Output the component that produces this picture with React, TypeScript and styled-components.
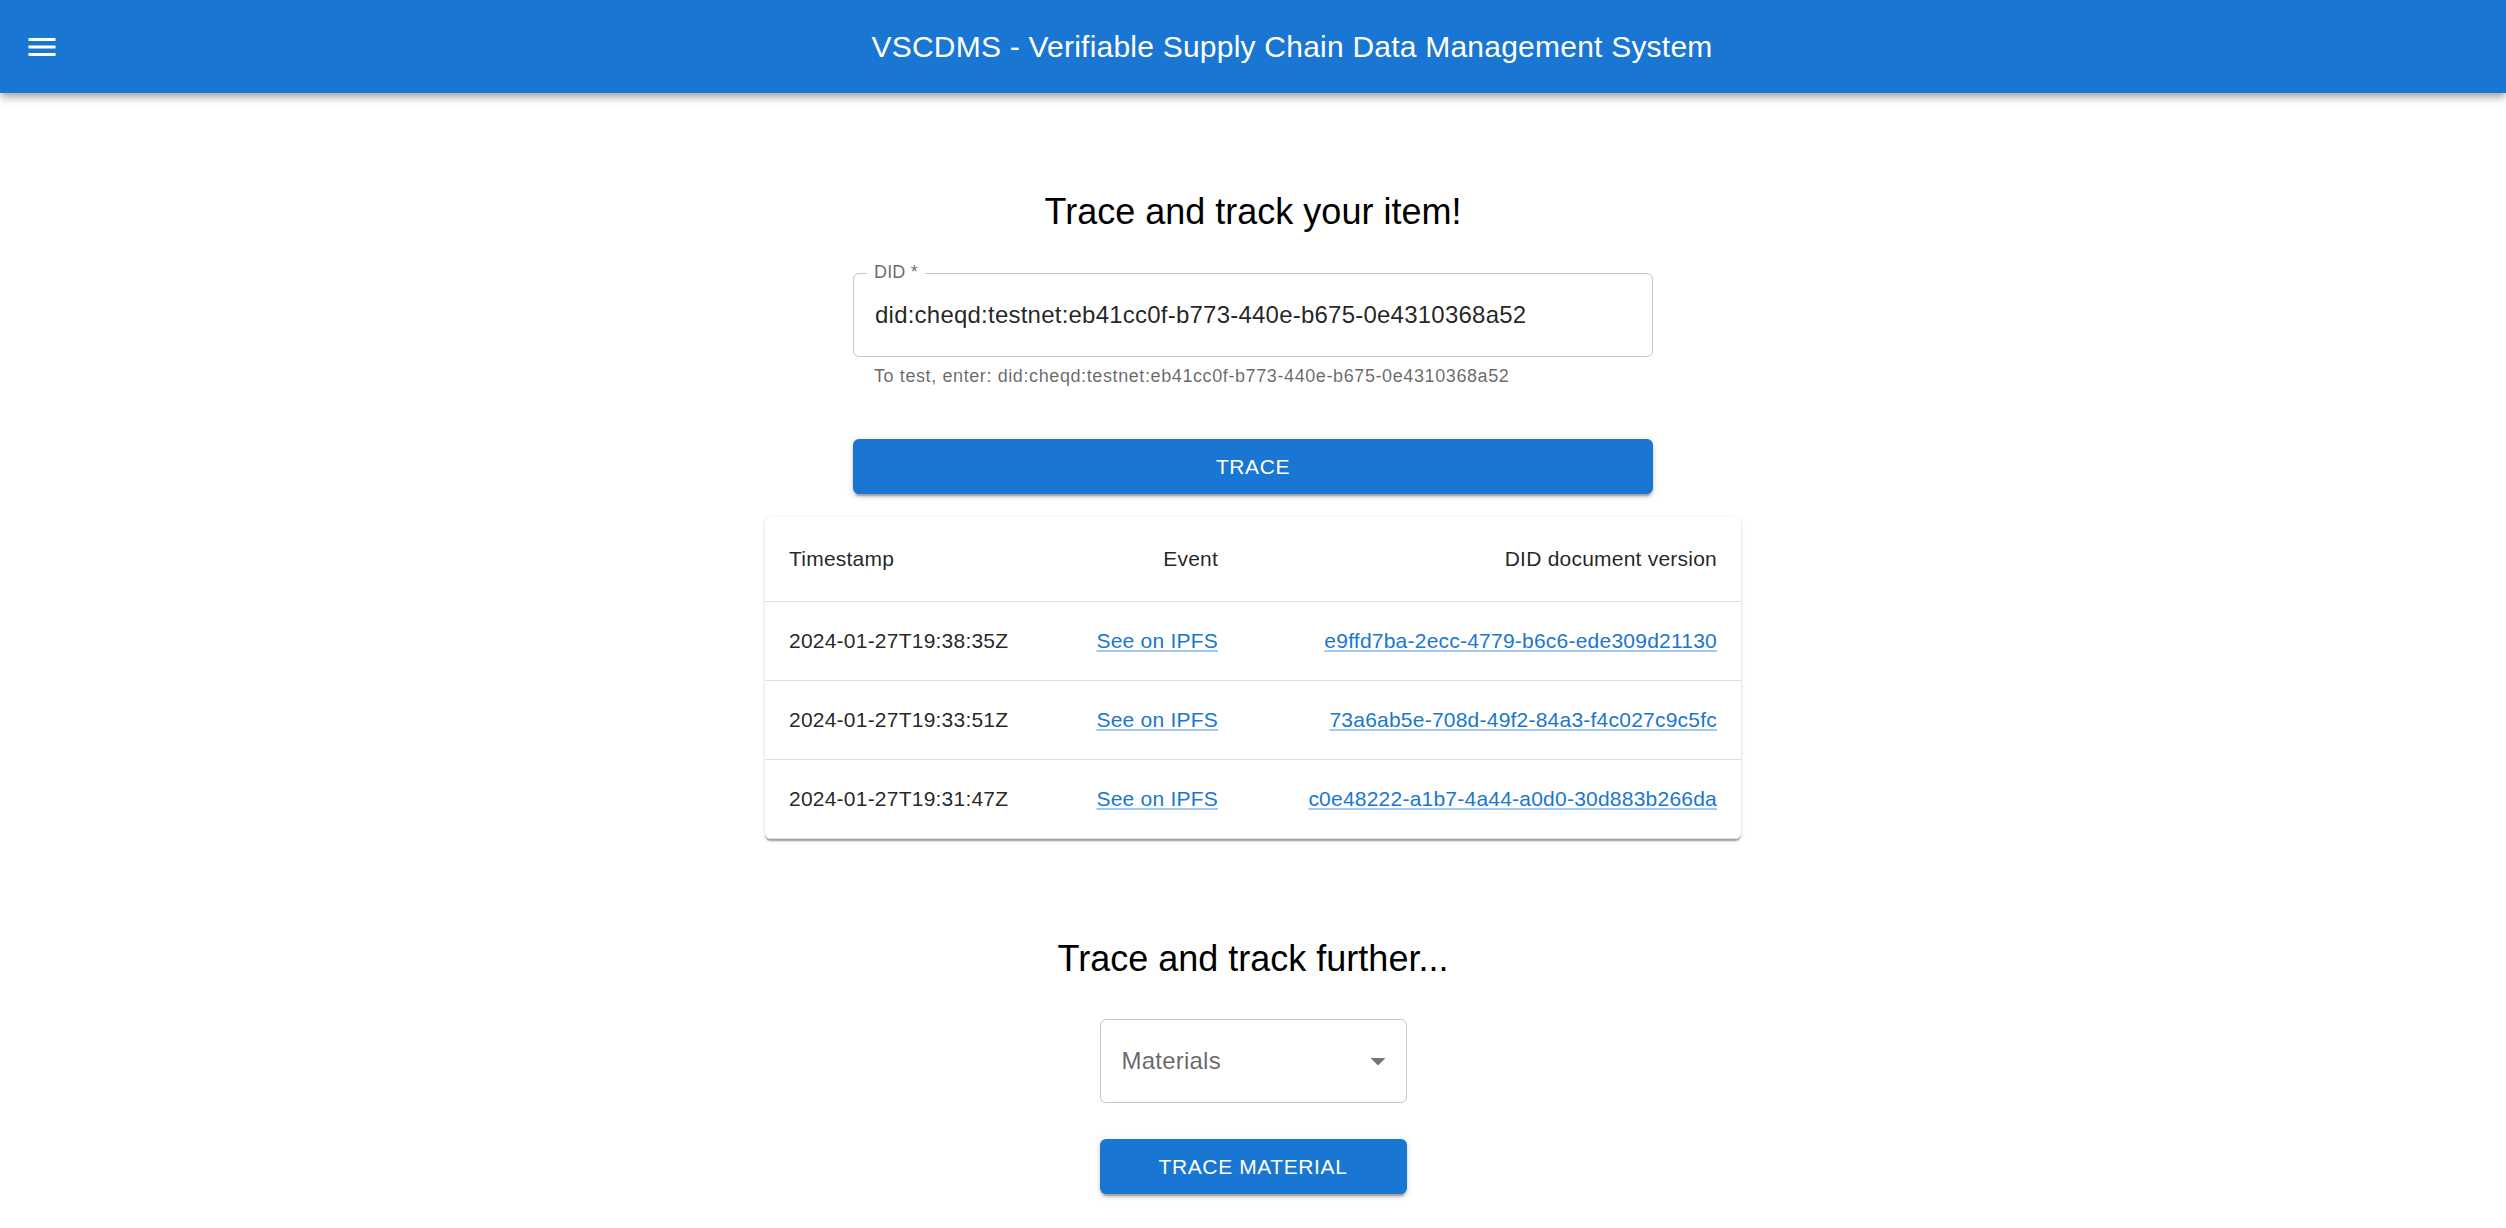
import styled, { createGlobalStyle } from 'styled-components';

const BLUE = '#1976d2';
const TEXT = 'rgba(0, 0, 0, 0.87)';
const TEXT2 = 'rgba(0, 0, 0, 0.6)';

const GlobalStyle = createGlobalStyle`
  html, body {
    margin: 0;
    padding: 0;
    background: #ffffff;
    font-family: "Liberation Sans", Arial, sans-serif;
    color: ${TEXT};
  }
  * {
    box-sizing: border-box;
  }
`;

const events = [
  {
    timestamp: '2024-01-27T19:38:35Z',
    version: 'e9ffd7ba-2ecc-4779-b6c6-ede309d21130',
  },
  {
    timestamp: '2024-01-27T19:33:51Z',
    version: '73a6ab5e-708d-49f2-84a3-f4c027c9c5fc',
  },
  {
    timestamp: '2024-01-27T19:31:47Z',
    version: 'c0e48222-a1b7-4a44-a0d0-30d883b266da',
  },
];

const MenuIcon = () => (
  <svg width="36" height="36" viewBox="0 0 24 24" fill="currentColor">
    <path d="M3 18h18v-2H3zm0-5h18v-2H3zm0-7v2h18V6z" />
  </svg>
);

const ArrowDropDown = () => (
  <svg width="36" height="36" viewBox="0 0 24 24" fill="rgba(0, 0, 0, 0.54)">
    <path d="M7 10l5 5 5-5z" />
  </svg>
);

const App = () => {
  return (
    <>
      <GlobalStyle />
      <AppBar>
        <MenuButton aria-label="menu">
          <MenuIcon />
        </MenuButton>
        <BarTitle>VSCDMS - Verifiable Supply Chain Data Management System</BarTitle>
      </AppBar>

      <Main>
        <Heading>Trace and track your item!</Heading>

        <Form>
          <Outlined>
            <FloatLabel>DID *</FloatLabel>
            <Input defaultValue="did:cheqd:testnet:eb41cc0f-b773-440e-b675-0e4310368a52" />
          </Outlined>
          <Helper>To test, enter: did:cheqd:testnet:eb41cc0f-b773-440e-b675-0e4310368a52</Helper>
          <Button $top={48}>Trace</Button>
        </Form>

        <Paper>
          <Table>
            <colgroup>
              <col style={{ width: 300 }} />
              <col style={{ width: 177 }} />
              <col />
            </colgroup>
            <thead>
              <tr>
                <HeadCell>Timestamp</HeadCell>
                <HeadCell $align="right">Event</HeadCell>
                <HeadCell $align="right">DID document version</HeadCell>
              </tr>
            </thead>
            <tbody>
              {events.map((e) => (
                <tr key={e.version}>
                  <Cell>{e.timestamp}</Cell>
                  <Cell $align="right">
                    <Link href="#">See on IPFS</Link>
                  </Cell>
                  <Cell $align="right">
                    <Link href="#">{e.version}</Link>
                  </Cell>
                </tr>
              ))}
            </tbody>
          </Table>
        </Paper>

        <Heading $top={96}>Trace and track further...</Heading>

        <SelectColumn>
          <SelectBox>
            <Placeholder>Materials</Placeholder>
            <ArrowDropDown />
          </SelectBox>
          <Button $top={36}>Trace material</Button>
        </SelectColumn>
      </Main>
    </>
  );
};

const AppBar = styled.header`
  height: 93px;
  padding: 0 24px;
  display: flex;
  align-items: center;
  background: ${BLUE};
  color: #ffffff;
  box-shadow: 0px 3px 6px -1.5px rgba(0, 0, 0, 0.2),
    0px 6px 7.5px 0px rgba(0, 0, 0, 0.14),
    0px 1.5px 15px 0px rgba(0, 0, 0, 0.12);
  position: relative;
  z-index: 1;
`;

const MenuButton = styled.button`
  display: flex;
  align-items: center;
  justify-content: center;
  padding: 18px;
  margin: 0 24px 0 -18px;
  border: none;
  background: transparent;
  color: inherit;
  border-radius: 50%;
  cursor: pointer;
`;

const BarTitle = styled.div`
  flex: 1;
  text-align: center;
  font-size: 30px;
  line-height: 1.6;
  font-weight: 500;
  letter-spacing: 0.0075em;
`;

const Main = styled.main`
  display: flex;
  flex-direction: column;
  align-items: center;
  padding: 95px 0 40px;
`;

const Heading = styled.h2<{ $top?: number }>`
  margin: ${(p) => p.$top ?? 0}px 0 0;
  font-size: 36px;
  line-height: 48px;
  font-weight: 400;
  color: #000000;
`;

const Form = styled.div`
  width: 800px;
  margin-top: 37px;
  display: flex;
  flex-direction: column;
`;

const Outlined = styled.div`
  position: relative;
  height: 84px;
  padding: 0 21px;
  display: flex;
  align-items: center;
  border: 1px solid rgba(0, 0, 0, 0.23);
  border-radius: 6px;
`;

const FloatLabel = styled.span`
  position: absolute;
  top: -11px;
  left: 13px;
  padding: 0 7px;
  background: #ffffff;
  font-size: 18px;
  line-height: 18px;
  letter-spacing: 0.00938em;
  color: ${TEXT2};
`;

const Input = styled.input`
  width: 100%;
  border: none;
  outline: none;
  padding: 0;
  background: transparent;
  font-family: inherit;
  font-size: 24px;
  line-height: 1.4375;
  letter-spacing: 0.00938em;
  height: 34.5px;
  color: ${TEXT};
`;

const Helper = styled.div`
  margin: 4.5px 21px 0;
  font-size: 18px;
  line-height: 1.66;
  letter-spacing: 0.03333em;
  color: ${TEXT2};
`;

const Button = styled.button<{ $top: number }>`
  width: 100%;
  height: 55px;
  margin-top: ${(p) => p.$top}px;
  padding: 9px 24px;
  border: none;
  border-radius: 6px;
  background: ${BLUE};
  color: #ffffff;
  font-family: inherit;
  font-size: 21px;
  font-weight: 500;
  line-height: 1.75;
  letter-spacing: 0.02857em;
  text-transform: uppercase;
  cursor: pointer;
  box-shadow: 0px 4.5px 1.5px -3px rgba(0, 0, 0, 0.2),
    0px 3px 3px 0px rgba(0, 0, 0, 0.14),
    0px 1.5px 7.5px 0px rgba(0, 0, 0, 0.12);
`;

const Paper = styled.div`
  width: 976px;
  margin-top: 23px;
  border-radius: 6px;
  background: #ffffff;
  overflow: hidden;
  box-shadow: 0px 3px 1.5px -1.5px rgba(0, 0, 0, 0.2),
    0px 1.5px 1.5px 0px rgba(0, 0, 0, 0.14),
    0px 1.5px 4.5px 0px rgba(0, 0, 0, 0.12);
`;

const Table = styled.table`
  width: 100%;
  border-collapse: collapse;
  table-layout: fixed;
`;

const HeadCell = styled.th<{ $align?: 'left' | 'right' }>`
  padding: 24px;
  text-align: ${(p) => p.$align ?? 'left'};
  font-size: 21px;
  font-weight: 500;
  line-height: 36px;
  letter-spacing: 0.01071em;
  color: ${TEXT};
  border-bottom: 1px solid #e0e0e0;
  white-space: nowrap;
`;

const Cell = styled.td<{ $align?: 'left' | 'right' }>`
  padding: 24px;
  text-align: ${(p) => p.$align ?? 'left'};
  font-size: 21px;
  line-height: 30px;
  letter-spacing: 0.01071em;
  color: ${TEXT};
  border-bottom: 1px solid #e0e0e0;
  white-space: nowrap;
`;

const Link = styled.a`
  color: ${BLUE};
  text-decoration: underline;
  text-decoration-color: rgba(25, 118, 210, 0.4);
`;

const SelectColumn = styled.div`
  width: 307px;
  margin-top: 36px;
  display: flex;
  flex-direction: column;
`;

const SelectBox = styled.div`
  height: 84px;
  padding: 0 10px 0 21px;
  display: flex;
  align-items: center;
  justify-content: space-between;
  border: 1px solid rgba(0, 0, 0, 0.23);
  border-radius: 6px;
  cursor: pointer;
`;

const Placeholder = styled.span`
  font-size: 24px;
  line-height: 1.4375;
  letter-spacing: 0.00938em;
  color: ${TEXT2};
`;

export default App;
